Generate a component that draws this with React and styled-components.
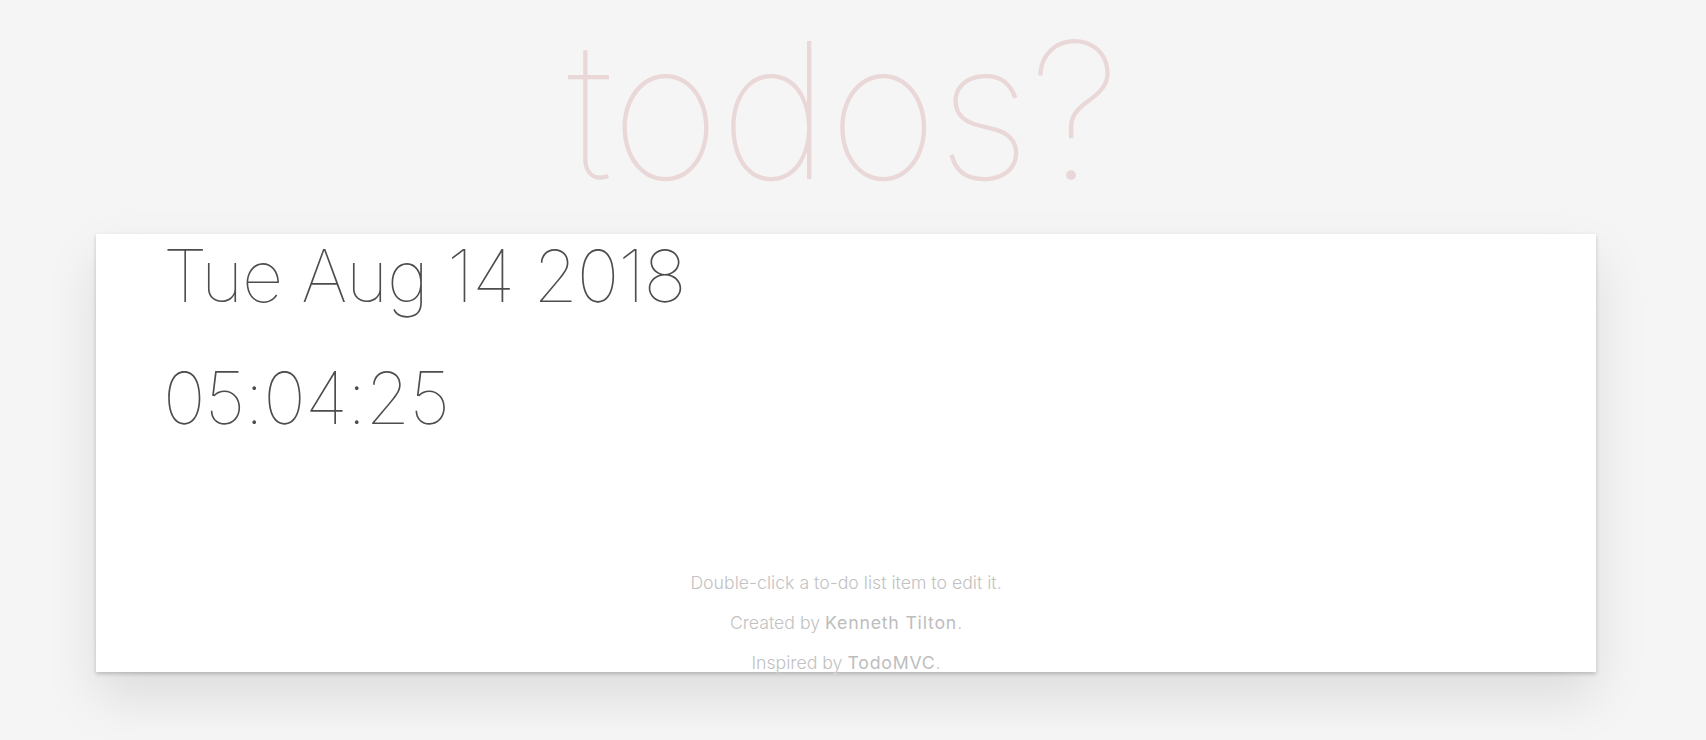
import React from "react";
import styled, { createGlobalStyle } from "styled-components";

const GlobalStyle = createGlobalStyle`
  html, body {
    margin: 0;
    padding: 0;
  }
  body {
    background: #f5f5f5;
    color: #4d4d4d;
    font-family: "Inter", "Helvetica Neue", Helvetica, Arial, sans-serif;
    font-weight: 300;
    min-height: 740px;
  }
`;

const Page = styled.div`
  width: 1500px;
  margin-left: 96px;
`;

const Title = styled.h1`
  margin: 0 0 29px;
  padding-top: 15px;
  font-size: 190px;
  line-height: 190px;
  font-weight: 100;
  letter-spacing: -1.3px;
  text-align: center;
  color: rgba(175, 47, 47, 0.15);
  text-indent: -6px;
`;

const Card = styled.section`
  position: relative;
  height: 438px;
  background: #fff;
  box-shadow: 0 2px 4px 0 rgba(0, 0, 0, 0.2), 0 25px 50px 0 rgba(0, 0, 0, 0.1);
  display: flex;
  flex-direction: column;
`;

const Clock = styled.div`
  padding: 6px 0 0 67px;
  display: flex;
  flex-direction: column;
  gap: 50px;
`;

const ClockLine = styled.div`
  font-size: 72px;
  line-height: 72px;
  font-weight: 100;
  letter-spacing: ${(p) => p.$spacing};
  color: #4d4d4d;
`;

const Info = styled.footer`
  margin-top: 129px;
  text-align: center;
  color: #c2c2c2;
  font-size: 17.7px;
  font-weight: 300;
  text-shadow: 0 1px 0 rgba(255, 255, 255, 0.5);
`;

const InfoLine = styled.p`
  margin: 0;
  line-height: 40px;
`;

const InfoLink = styled.a`
  color: #bdbdbd;
  font-weight: 400;
  letter-spacing: 0.8px;
  text-decoration: none;
`;

export default function App() {
  return (
    <>
      <GlobalStyle />
      <Page>
        <Title>todos?</Title>
        <Card>
          <Clock>
            <ClockLine $spacing="-1.1px">Tue Aug 14 2018</ClockLine>
            <ClockLine $spacing="-0.8px">05:04:25</ClockLine>
          </Clock>
          <Info>
            <InfoLine>Double-click a to-do list item to edit it.</InfoLine>
            <InfoLine>
              Created by <InfoLink href="#">Kenneth Tilton</InfoLink>.
            </InfoLine>
            <InfoLine>
              Inspired by <InfoLink href="#">TodoMVC</InfoLink>.
            </InfoLine>
          </Info>
        </Card>
      </Page>
    </>
  );
}
